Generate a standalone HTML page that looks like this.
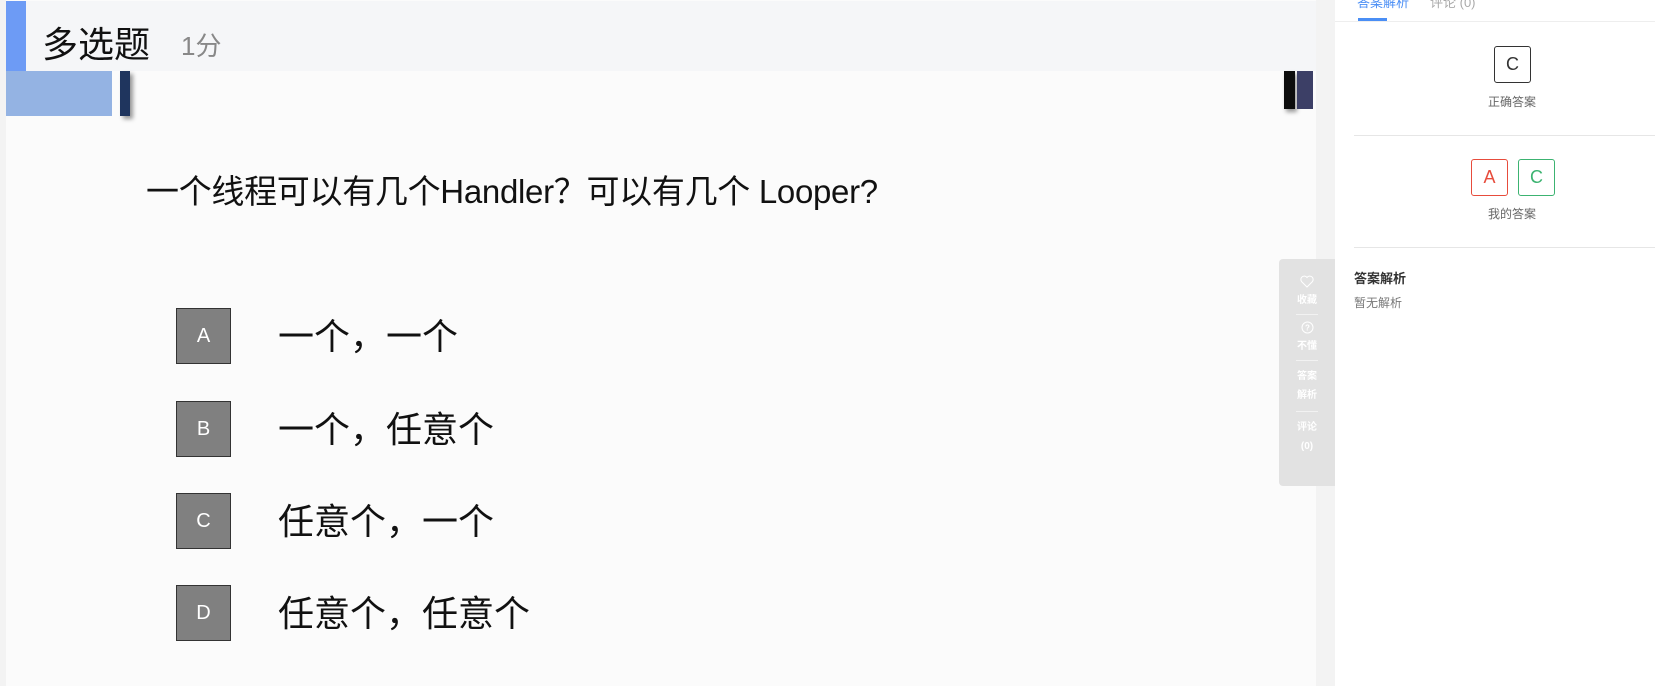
<!DOCTYPE html>
<html><head><meta charset="utf-8"><style>
*{margin:0;padding:0;box-sizing:border-box}
body{width:1655px;height:686px;overflow:hidden;background:#f3f3f3;font-family:"Liberation Sans","Noto Sans CJK SC",sans-serif;position:relative}
.abs{position:absolute}
.main{left:6px;top:0;width:1310px;height:686px;background:#fbfbfb}
.hdr{left:6px;top:1px;width:1310px;height:70px;background:#f5f6f8}
.opt{position:absolute;left:176px;width:55px;height:56px;background:#808080;border:1px solid #333;color:#fff;font-size:20px;text-align:center;line-height:54px}
.ot{position:absolute;left:278px;font-size:36px;color:#111;line-height:40px}
.fb{color:#fff;font-size:10px;font-weight:bold;text-align:center;width:56px;line-height:15px}
.sep{width:22px;height:1px;background:#f2f2f2;margin:6px auto}
.panel{left:1335px;top:0;width:320px;height:686px;background:#fff}
.bx{position:absolute;width:37px;height:37px;border:1px solid #333;border-radius:3px;text-align:center;line-height:35px;font-size:18px}
.lbl{position:absolute;font-size:12px;color:#666;width:320px;left:17px;text-align:center}
</style></head><body>
<div class="abs main"></div>
<div class="abs hdr"></div>
<div class="abs" style="left:6px;top:1px;width:20px;height:70px;background:#6d9bf5"></div>
<div class="abs" style="left:42px;top:16px;font-size:36px;color:#111">多选题</div>
<div class="abs" style="left:181px;top:26px;font-size:26px;color:#888">1分</div>
<div class="abs" style="left:6px;top:71px;width:106px;height:45px;background:#94b3e3"></div>
<div class="abs" style="left:120px;top:71px;width:10px;height:45px;background:#1f355e;box-shadow:3px 3px 4px rgba(0,0,0,.4)"></div>
<div class="abs" style="left:1284px;top:71px;width:11px;height:38px;background:#0d0d0d;box-shadow:2px 3px 4px rgba(0,0,0,.4)"></div>
<div class="abs" style="left:1297px;top:71px;width:16px;height:38px;background:#3c3f66"></div>
<div class="abs" style="left:146px;top:165px;font-size:33px;color:#111;letter-spacing:-0.3px">一个线程可以有几个Handler？可以有几个 Looper?</div>
<div class="opt" style="top:308px">A</div><div class="ot" style="top:317px">一个，一个</div>
<div class="opt" style="top:401px">B</div><div class="ot" style="top:410px">一个，任意个</div>
<div class="opt" style="top:493px">C</div><div class="ot" style="top:502px">任意个，一个</div>
<div class="opt" style="top:585px">D</div><div class="ot" style="top:594px">任意个，任意个</div>
<div class="abs" style="left:1279px;top:259px;width:56px;height:227px;background:#e2e2e2;border-radius:4px 0 0 4px;padding-top:16px">
<div class="fb"><svg width="14" height="13" viewBox="0 0 14 13"><path d="M7 12 L1.5 6.5 A3 3 0 0 1 7 2.5 A3 3 0 0 1 12.5 6.5 Z" fill="none" stroke="#fff" stroke-width="1"/></svg><br>收藏</div>
<div class="sep"></div>
<div class="fb"><svg width="13" height="13" viewBox="0 0 13 13"><circle cx="6.5" cy="6.5" r="5.5" fill="none" stroke="#fff"/><text x="6.5" y="9.5" font-size="8" fill="#fff" text-anchor="middle">?</text></svg><br>不懂</div>
<div class="sep"></div>
<div class="fb" style="line-height:19px">答案<br>解析</div>
<div class="sep"></div>
<div class="fb" style="line-height:19px">评论<br>(0)</div>
</div>
<div class="abs panel">
<div class="abs" style="left:22px;top:-8px;font-size:13px;color:#4a8ef5">答案解析</div>
<div class="abs" style="left:95px;top:-8px;font-size:13px;color:#aaa">评论 (0)</div>
<div class="abs" style="left:23px;top:18px;width:29px;height:3px;background:#4a8ef5"></div>
<div class="abs" style="left:0;top:21px;width:320px;height:1px;background:#eee"></div>
<div class="bx" style="left:159px;top:46px;color:#333">C</div>
<div class="lbl" style="top:93px">正确答案</div>
<div class="abs" style="left:19px;top:135px;width:301px;height:1px;background:#e6e6e6"></div>
<div class="bx" style="left:136px;top:159px;color:#e74c3c;border-color:#e74c3c">A</div>
<div class="bx" style="left:183px;top:159px;color:#3cb371;border-color:#3cb371">C</div>
<div class="lbl" style="top:205px">我的答案</div>
<div class="abs" style="left:19px;top:247px;width:301px;height:1px;background:#e6e6e6"></div>
<div class="abs" style="left:19px;top:268px;font-size:13px;font-weight:bold;color:#333">答案解析</div>
<div class="abs" style="left:19px;top:294px;font-size:12px;color:#777">暂无解析</div>
</div>
</body></html>
